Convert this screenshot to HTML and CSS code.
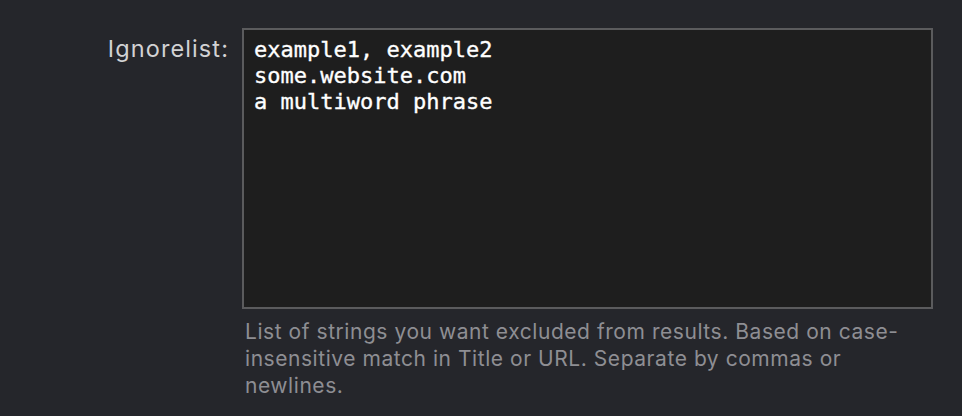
FILE: index.html
```html
<!DOCTYPE html>
<html>
<head>
<meta charset="utf-8">
<link rel="stylesheet" href="styles.css">
</head>
<body>
<div class="row">
  <label class="label" for="ignore">Ignorelist:</label>
  <div class="field">
    <textarea id="ignore" class="input" spellcheck="false">example1, example2
some.website.com
a multiword phrase</textarea>
    <p class="help">List of strings you want excluded from results. Based on case-insensitive match in Title or URL. Separate by commas or newlines.</p>
  </div>
</div>
</body>
</html>
```
FILE: styles.css
```css
html, body {
  margin: 0;
  padding: 0;
  background: #25262b;
  height: 100%;
}
.row {
  display: grid;
  grid-template-columns: 229px 691px;
  column-gap: 13px;
  padding-top: 28px;
}
.label {
  text-align: right;
  font-family: Inter, "Liberation Sans", sans-serif;
  font-size: 23.5px;
  letter-spacing: 1.1px;
  line-height: 26px;
  color: #d2d2d4;
  padding-top: 8px;
}
.field {
  display: flex;
  flex-direction: column;
}
.input {
  box-sizing: border-box;
  width: 691px;
  height: 281px;
  margin: 0;
  border: 2px solid #5b5b5d;
  background: #1e1e1e;
  color: #ffffff;
  font-family: "DejaVu Sans Mono", monospace;
  font-size: 22px;
  line-height: 26px;
  -webkit-text-stroke: 0.35px #ffffff;
  padding: 7px 10px;
  resize: none;
  outline: none;
  overflow: hidden;
}
.help {
  margin: 9px 0 0;
  padding: 0 0 0 3px;
  width: 680px;
  font-family: Inter, "Liberation Sans", sans-serif;
  font-size: 21px;
  letter-spacing: 0.55px;
  line-height: 27px;
  color: #8e8e93;
}
```
